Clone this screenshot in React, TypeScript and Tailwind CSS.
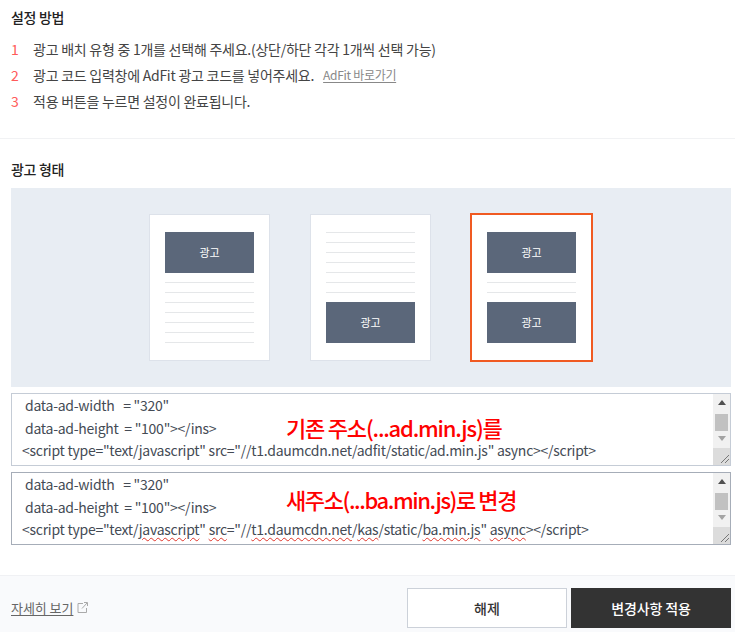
import type { ReactNode } from "react";

const font = { fontFamily: '"Noto Sans CJK KR", "Noto Sans", sans-serif' };

function Banner() {
  return (
    <div className="h-[41px] w-[89px] shrink-0 bg-[#5b677a] flex items-center justify-center text-[11px] leading-none text-white">
      광고
    </div>
  );
}

function Lines({ count }: { count: number }) {
  return (
    <div className="w-[89px] flex flex-col">
      {Array.from({ length: count }).map((_, i) => (
        <div key={i} className="h-[10px] border-t border-[#e5e7e9]" />
      ))}
    </div>
  );
}

function Card({ children, selected }: { children: ReactNode; selected?: boolean }) {
  return (
    <div
      className={
        selected
          ? "w-[123px] h-[149px] bg-white border-2 border-[#f05a22] flex flex-col items-center pt-[17px]"
          : "w-[121px] h-[147px] bg-white border border-[#dde2ea] flex flex-col items-center pt-[17px]"
      }
    >
      {children}
    </div>
  );
}

function Scrollbar() {
  return (
    <div className="w-[17px] shrink-0 bg-[#f1f1f1] flex flex-col items-center">
      <div className="h-[20px] flex items-center justify-center pb-[3px]">
        <div className="w-0 h-0 border-x-[4px] border-x-transparent border-b-[5px] border-b-[#505050]" />
      </div>
      <div className="w-[13px] h-[17px] bg-[#c1c1c1]" />
      <div className="h-[17px] w-full flex items-center justify-center pb-[3px]">
        <div className="w-0 h-0 border-x-[4px] border-x-transparent border-t-[5px] border-t-[#a3a3a3]" />
      </div>
      <div className="flex-1 w-full bg-[#dcdcdc] flex items-end justify-end">
        <svg width="12" height="12" viewBox="0 0 12 12" className="mb-[1px]">
          <path d="M11 3 L3 11 M11 7 L7 11" stroke="#777" strokeWidth="1" fill="none" />
        </svg>
      </div>
    </div>
  );
}

function Squiggle({ children }: { children: ReactNode }) {
  return (
    <span className="underline decoration-wavy decoration-[#e0352b] decoration-1 underline-offset-2">{children}</span>
  );
}

function CodeBox({ children, note, dark }: { children: ReactNode; note: string; dark?: boolean }) {
  return (
    <div className={`relative h-[73px] border flex bg-white ${dark ? "border-[#a6adb8]" : "border-[#c5ccd6]"}`}>
      <div className="flex-1 pl-[10px] text-[14px] leading-[22.5px] tracking-[-0.26px] text-[#444b55] whitespace-pre overflow-hidden">
        <div className="pl-[3px]">data-ad-width&nbsp;&nbsp;&nbsp;= "320"</div>
        <div className="pl-[3px]">data-ad-height&nbsp;&nbsp;= "100"&gt;&lt;/ins&gt;</div>
        {children}
      </div>
      <Scrollbar />
      <div
        className={
          dark
            ? "absolute left-[274px] top-[11px] text-[22px] leading-[30px] font-medium tracking-[-1.4px] text-[#ff0000] whitespace-nowrap"
            : "absolute left-[274px] top-[18px] text-[22px] leading-[30px] font-medium tracking-[-1.2px] text-[#ff0000] whitespace-nowrap"
        }
      >
        {note}
      </div>
    </div>
  );
}

export default function App() {
  return (
    <div className="w-[735px] h-[632px] overflow-hidden bg-white flex flex-col" style={font}>
      {/* 설정 방법 */}
      <div className="h-[139px] px-[11px] pt-[7px] border-b border-[#f1f2f4]">
        <h3 className="text-[14px] leading-[20px] font-medium tracking-[-0.3px] text-[#222]">설정 방법</h3>
        <ol className="mt-[9px] text-[14px] leading-[26px] tracking-[-0.25px] text-[#444]">
          <li className="flex">
            <span className="w-[22px] text-[#ff5a5a]">1</span>
            광고 배치 유형 중 1개를 선택해 주세요.(상단/하단 각각 1개씩 선택 가능)
          </li>
          <li className="flex">
            <span className="w-[22px] text-[#ff5a5a]">2</span>
            광고 코드 입력창에 AdFit 광고 코드를 넣어주세요.
            <a className="ml-[9px] text-[12px] text-[#888] underline underline-offset-2 tracking-[-0.3px]">AdFit 바로가기</a>
          </li>
          <li className="flex">
            <span className="w-[22px] text-[#ff5a5a]">3</span>
            적용 버튼을 누르면 설정이 완료됩니다.
          </li>
        </ol>
      </div>

      {/* 광고 형태 */}
      <div className="px-[11px] pr-[4px] flex-1 flex flex-col">
        <h3 className="mt-[20px] text-[14px] leading-[20px] font-medium tracking-[-0.3px] text-[#222]">광고 형태</h3>
        <div className="mt-[9px] h-[199px] bg-[#e8edf3] flex items-center pl-[138px]">
          <Card>
            <Banner />
            <div className="mt-[9px]"><Lines count={7} /></div>
          </Card>
          <div className="ml-[40px]">
            <Card>
              <Lines count={7} />
              <Banner />
            </Card>
          </div>
          <div className="ml-[39px]">
            <Card selected>
              <Banner />
              <div className="mt-[9px]"><Lines count={2} /></div>
              <Banner />
            </Card>
          </div>
        </div>

        <div className="mt-[6px] flex flex-col gap-[6px]">
          <CodeBox note="기존 주소(...ad.min.js)를">
            <div>&lt;script type="text/javascript" src="//t1.daumcdn.net/adfit/static/ad.min.js" async&gt;&lt;/script&gt;</div>
          </CodeBox>
          <CodeBox note="새주소(...ba.min.js)로 변경" dark>
            <div>
              &lt;script type="text/<Squiggle>javascript</Squiggle>" <Squiggle>src</Squiggle>="//<Squiggle>t1.daumcdn.net</Squiggle>/<Squiggle>kas</Squiggle>/static/<Squiggle>ba.min.js</Squiggle>" <Squiggle>async</Squiggle>&gt;&lt;/script&gt;
            </div>
          </CodeBox>
        </div>
      </div>

      {/* footer */}
      <div className="h-[57px] border-t border-[#f0f1f4] bg-[#f9fafc] pl-[11px] pr-[4px] flex items-center justify-between">
        <a className="flex items-center gap-[4px] text-[13px] tracking-[-0.05px] text-[#666] underline underline-offset-2 mt-[7px]">
          자세히 보기
          <svg width="11" height="11" viewBox="0 0 11 11" fill="none" stroke="#aaa" strokeWidth="1">
            <path d="M6 1.5 H1 V10.5 H9.5 V6" />
            <path d="M5 6.5 L10 1 M7 0.5 H10.5 V4" />
          </svg>
        </a>
        <div className="flex gap-[4px] mt-[8px]">
          <button className="w-[160px] h-[40px] bg-white border border-[#ccd1d9] text-[14px] font-medium text-[#333]">해제</button>
          <button className="w-[160px] h-[40px] bg-[#333333] text-[14px] font-medium tracking-[-0.1px] text-white">변경사항 적용</button>
        </div>
      </div>
    </div>
  );
}
